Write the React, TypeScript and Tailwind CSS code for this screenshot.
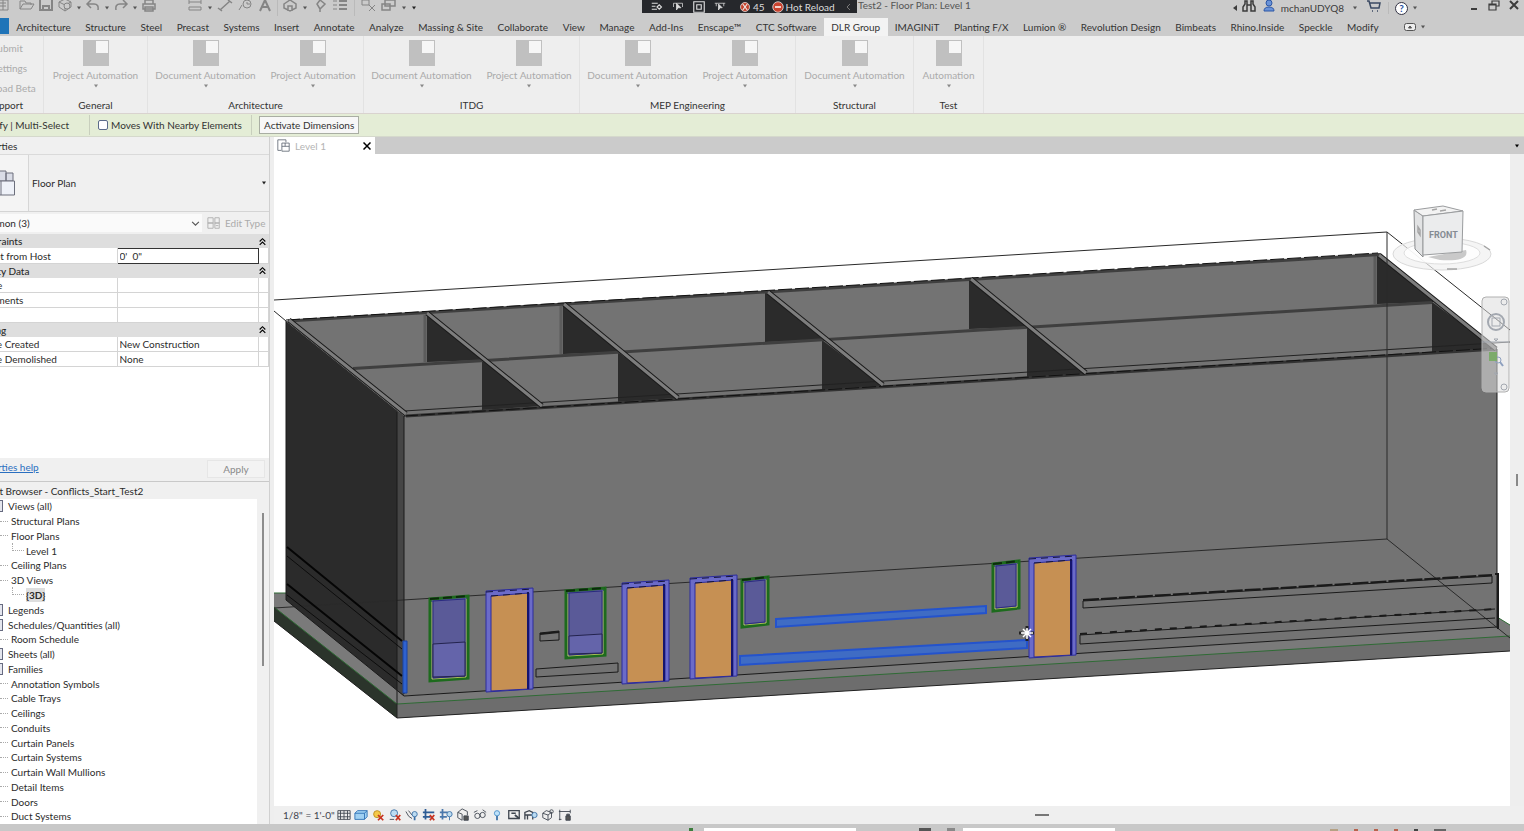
import { useState } from 'react';
import type { ReactNode } from 'react';
import clsx from 'clsx';

const TABS = [
    'Architecture', 'Structure', 'Steel', 'Precast', 'Systems', 'Insert', 'Annotate', 'Analyze',
    'Massing & Site', 'Collaborate', 'View', 'Manage', 'Add-Ins', 'Enscape™', 'CTC Software',
    'DLR Group', 'IMAGINiT', 'Planting F/X', 'Lumion ®', 'Revolution Design', 'Bimbeats',
    'Rhino.Inside', 'Speckle', 'Modify',
];

const PANELS = [
    { title: 'General', width: 'w-[104px]', tools: ['Project Automation'] },
    { title: 'Architecture', width: 'w-[216px]', tools: ['Document Automation', 'Project Automation'] },
    { title: 'ITDG', width: 'w-[216px]', tools: ['Document Automation', 'Project Automation'] },
    { title: 'MEP Engineering', width: 'w-[216px]', tools: ['Document Automation', 'Project Automation'] },
    { title: 'Structural', width: 'w-[118px]', tools: ['Document Automation'] },
    { title: 'Test', width: 'w-[70px]', tools: ['Automation'] },
];

const PROPERTY_GROUPS = [
    { name: 'Constraints', rows: [{ label: 'Offset from Host', value: "0'  0\"", editing: true }] },
    {
        name: 'Identity Data',
        rows: [
            { label: 'Image', value: '' },
            { label: 'Comments', value: '' },
            { label: 'Mark', value: '' },
        ],
    },
    {
        name: 'Phasing',
        rows: [
            { label: 'Phase Created', value: 'New Construction' },
            { label: 'Phase Demolished', value: 'None' },
        ],
    },
];

const BROWSER_ITEMS = [
    { level: 0, name: 'Views (all)' },
    { level: 1, name: 'Structural Plans' },
    { level: 1, name: 'Floor Plans' },
    { level: 2, name: 'Level 1' },
    { level: 1, name: 'Ceiling Plans' },
    { level: 1, name: '3D Views' },
    { level: 2, name: '{3D}' },
    { level: 0, name: 'Legends' },
    { level: 0, name: 'Schedules/Quantities (all)' },
    { level: 1, name: 'Room Schedule' },
    { level: 0, name: 'Sheets (all)' },
    { level: 0, name: 'Families' },
    { level: 1, name: 'Annotation Symbols' },
    { level: 1, name: 'Cable Trays' },
    { level: 1, name: 'Ceilings' },
    { level: 1, name: 'Conduits' },
    { level: 1, name: 'Curtain Panels' },
    { level: 1, name: 'Curtain Systems' },
    { level: 1, name: 'Curtain Wall Mullions' },
    { level: 1, name: 'Detail Items' },
    { level: 1, name: 'Doors' },
    { level: 1, name: 'Duct Systems' },
];

function Icon({ children, className = 'size-4' }: { children: ReactNode; className?: string }) {
    return (
        <svg viewBox="0 0 16 16" fill="none" stroke="currentColor" className={clsx('shrink-0', className)} aria-hidden="true">
            {children}
        </svg>
    );
}

function Caret({ className = 'text-[#555]' }: { className?: string }) {
    return (
        <svg viewBox="0 0 6 4" className={clsx('h-1 w-[6px] shrink-0', className)} fill="currentColor" aria-hidden="true">
            <path d="M1 0.5h4L3 3.5z" />
        </svg>
    );
}

function TitleBar() {
    return (
        <header className="flex h-[18px] shrink-0 items-start overflow-hidden bg-[#cbcbcb] text-[#555]">
            {/* Quick access tools */}
            <div className="flex w-[642px] shrink-0 items-center text-[#858585]">
                <div className="flex w-[170px] shrink-0 items-center gap-[3px]">
                    <Icon className="-ml-1 size-4"><path d="M2 0h10v10H2zM4 3h6M4 6h6M7 0v10" /></Icon>
                    <Icon className="ml-1 size-4"><path d="M1 9V1h5l1 2h5v2M1 9l3-5h11l-3 5z" /></Icon>
                    <Icon><path strokeWidth="2" d="M2 0v10h12V0M5 10V6h6v4" /></Icon>
                    <Icon><path d="M2 2l6-3 6 3v5l-6 4-6-4zM2 2l6 3 6-3M8 5v6" /><circle cx="10" cy="6" r="3" fill="#cbcbcb" /></Icon>
                    <Caret />
                    <Icon><path d="M6 0L2 4l4 4M2 4h7q5 0 4 6" strokeWidth="1.500" /></Icon>
                    <Caret />
                    <Icon><path d="M10 0l4 4-4 4M14 4H7q-5 0-4 6" strokeWidth="1.500" /></Icon>
                    <Caret />
                    <Icon><path d="M4 4V0h8v4M2 4h12v5H2zM4 7h8v4H4z" strokeWidth="1.500" /></Icon>
                </div>
                <div className="ml-[17px] flex items-center gap-1">
                    <Icon><path d="M2 0v4M14 0v4M2 2h12M2 7h12v3H2z" /></Icon>
                    <Caret />
                    <Icon><path d="M3 10L13 1M1 8l4 3M11 0l4 3" strokeWidth="1.500" /></Icon>
                    <Icon><path d="M2 10L5 5" /><circle cx="10" cy="4" r="4" /><path d="M10 2v2h3" /></Icon>
                    <Icon><path strokeWidth="2" d="M3 11L8 0l5 11M5 7h6" /></Icon>
                    <span className="h-4 w-px bg-[#bababa]" />
                    <Icon><path d="M2 4l6-4 6 4v4l-6 3-6-3zM6 11V6h4v5" strokeWidth="1.500" /></Icon>
                    <Caret />
                    <Icon><path d="M8 0l5 4-5 5-3-5zM8 9v3" strokeWidth="1.500" /></Icon>
                    <Icon><path d="M1 1h4M1 5h4M1 9h4" /><path strokeWidth="2" d="M7 1h8M7 5h8M7 9h8" /></Icon>
                    <span className="mx-[2px] h-4 w-px bg-[#bababa]" />
                    <Icon><path d="M1 0h7v5H1zM8 5l6 6M14 5l-6 6" /></Icon>
                    <Icon><path d="M4 0h10v6H4zM1 4h8v6H1z" strokeWidth="1.500" /></Icon>
                    <Caret />
                    <Caret className="text-[#222]" />
                </div>
            </div>

            {/* Hot reload overlay */}
            <div className="flex h-[13px] w-[215px] shrink-0 items-center gap-[5px] bg-[#26282c] pl-[7px] leading-[10px] text-[#ddd]">
                <Icon className="h-3 w-4"><path d="M1 3h8M1 7h5M1 11h7M8 8l3-3 3 3-3 3z" strokeWidth="1.500" /></Icon>
                <Icon className="h-3 w-4"><path d="M2 8V3h12v5" /><path d="M6 3l6 6H8l-2 3z" fill="currentColor" /></Icon>
                <Icon className="h-3 w-4"><path d="M1 1h14v14H1zM5 5h6v6H5z" strokeWidth="1.500" /></Icon>
                <Icon className="h-3 w-4"><path d="M1 3h14M3 7V3M13 7V3" /><path d="M6 4l5 5H8l-2 3z" fill="currentColor" /></Icon>
                <span className="ml-1 flex items-center">
                    <Icon className="h-3 w-4"><circle cx="8" cy="8" r="6" fill="#c5442e" stroke="#eee" /><path d="M5 4l6 8M11 4l-6 8" stroke="#eee" strokeWidth="1.500" /></Icon>
                    45
                </span>
                <span className="flex items-center whitespace-nowrap">
                    <Icon className="h-3 w-4"><circle cx="8" cy="8" r="7" fill="#c9432f" stroke="#eee" /><path d="M4 8h8" strokeWidth="2" stroke="#fff" /></Icon>
                    Hot Reload
                </span>
                <Icon className="ml-auto mr-1 size-2 text-[#777]"><path d="M10 2L4 8l6 6" strokeWidth="2" /></Icon>
            </div>
            <span className="whitespace-nowrap pl-px leading-[10px]">Test2 - Floor Plan: Level 1</span>

            <div className="ml-auto flex items-center gap-1 pr-[2px] leading-[11px] text-[#3c3c3c]">
                <svg viewBox="0 0 4 6" className="h-[6px] w-1" fill="currentColor" aria-hidden="true"><path d="M4 0v6L0 3z" /></svg>
                <Icon><path d="M4 1v3L2 7v4h4V1zM12 1v3l2 3v4h-4V1zM6 5h4" strokeWidth="1.500" /></Icon>
                <Icon className="size-4 text-[#2d57a5]"><circle cx="8" cy="3" r="3" fill="#6a93d8" /><path d="M3 11q0-4 5-4t5 4z" fill="#6a93d8" /></Icon>
                <span>mchanUDYQ8</span>
                <Caret className="mx-1 text-[#555]" />
                <Icon><path d="M1 1h2l2 7h8l1-5H4M6 11h1M11 11h1" strokeWidth="1.500" stroke="#3b4a63" /></Icon>
                <span className="mx-[2px] h-3 w-px bg-[#bababa]" />
                <span className="flex size-[13px] items-center justify-center rounded-full border border-[#334] bg-white font-bold text-[#2450a0]">?</span>
                <Caret />
                <button aria-label="Minimize" className="ml-11"><Icon><path d="M5 9h6" strokeWidth="2" /></Icon></button>
                <button aria-label="Restore"><Icon><path d="M6 4V1h7v5h-3M3 4h7v6H3zM3 5h7" strokeWidth="1.200" /></Icon></button>
                <button aria-label="Close"><Icon><path d="M4 1l8 8M12 1l-8 8" strokeWidth="2" /></Icon></button>
            </div>
        </header>
    );
}

function RibbonTabs({ active, onSelect }: { active: string; onSelect: (tab: string) => void }) {
    return (
        <nav className="flex h-[18px] shrink-0 bg-[#cbcbcb]">
            <button aria-label="File" className="h-4 w-[9px] shrink-0 bg-[#1f74b8]" />
            <div className="flex min-w-0 flex-auto">
                {TABS.map((tab) => (
                    <button
                        key={tab}
                        onClick={() => onSelect(tab)}
                        className={clsx('flex-auto whitespace-nowrap text-[#333]', tab === active && 'bg-[#f3f3f3]')}
                    >
                        {tab}
                    </button>
                ))}
            </div>
            <button aria-label="Ribbon display" className="flex w-[138px] shrink-0 items-center gap-1 pl-[18px] text-[#555]">
                <svg viewBox="0 0 12 8" className="h-2 w-3" fill="none" stroke="currentColor" aria-hidden="true">
                    <rect x="0.5" y="0.5" width="11" height="7" rx="2" fill="#eee" />
                    <path d="M4.500 5L6 3l1.500 2z" fill="currentColor" />
                </svg>
                <Caret />
            </button>
        </nav>
    );
}

function Ribbon() {
    return (
        <section className="flex h-[78px] shrink-0 border-b border-[#d9d3cf] bg-[#eeeeee]">
            <div className="flex w-[43px] shrink-0 flex-col overflow-hidden text-[#ababab]">
                <div className="-ml-2 flex flex-col gap-[6px] whitespace-nowrap pt-[5px]">
                    <button className="text-left">Submit</button>
                    <button className="text-left">Settings</button>
                    <button className="text-left">Load Beta</button>
                </div>
                <div className="-ml-3 mt-auto pb-[1px] text-[#333]">Support</div>
            </div>
            {PANELS.map((panel) => (
                <div key={panel.title} className={clsx('flex shrink-0 flex-col border-l border-[#e2e2e2]', panel.width)}>
                    <div className="flex justify-around pt-1">
                        {panel.tools.map((tool) => (
                            <button key={tool} className="flex flex-col items-center whitespace-nowrap text-[#ababab]">
                                <svg viewBox="0 0 26 26" className="mb-[2px] size-[26px]" aria-hidden="true">
                                    <path d="M0 0h26v26H0z" fill="#c0c0c0" />
                                    <path d="M13 1h12v12H13z" fill="#f6f6f6" />
                                </svg>
                                {tool}
                                <Caret className="mt-[2px] text-[#888]" />
                            </button>
                        ))}
                    </div>
                    <div className="mt-auto pb-[1px] text-center text-[#333]">{panel.title}</div>
                </div>
            ))}
            <div className="border-l border-[#e2e2e2]" />
        </section>
    );
}

function OptionsBar() {
    return (
        <section className="flex h-[23px] shrink-0 items-center overflow-hidden whitespace-nowrap border-b border-[#d5d9cc] bg-[#e4edd6] text-[#333]">
            <div className="flex w-[90px] shrink-0 justify-end overflow-hidden border-r border-[#c8cfbd] pr-5 leading-5">Modify | Multi-Select</div>
            <label className="flex w-[162px] shrink-0 items-center gap-[3px] border-r border-[#c8cfbd] pl-2 leading-5">
                <input type="checkbox" className="size-[10px] appearance-none rounded-[2px] border border-[#5b6b8a] bg-white" />
                Moves With Nearby Elements
            </label>
            <button className="ml-[7px] h-[18px] shrink-0 border border-[#a9aea3] bg-[#f7f7f7] px-1">Activate Dimensions</button>
        </section>
    );
}

function Properties() {
    return (
        <section className="flex h-[345px] shrink-0 flex-col overflow-hidden border-b border-[#c9c9c9] bg-[#f0f0f0]">
            <h2 className="-ml-7 h-[18px] shrink-0 border-b border-[#dadada] leading-[18px]">Properties</h2>
            <div className="flex h-[57px] shrink-0 items-center border-b border-[#d4d4d4] pr-[2px]">
                <div className="flex h-full w-[29px] items-center border-r border-[#d6d6d6] bg-[#f4f4f4]">
                    <svg viewBox="0 0 16 28" className="h-7 w-4" fill="#eef1f8" stroke="#6c6f7c" aria-hidden="true">
                        <path d="M-4 2H6v10H-4zM6 4h7v8H6z" fill="#d9dce6" />
                        <path d="M-4 12H14.500V26H-4zM1 12v14" />
                    </svg>
                </div>
                <span className="pl-[3px]">Floor Plan</span>
                <Caret className="ml-auto text-[#222]" />
            </div>
            <div className="flex h-[22px] shrink-0 items-center">
                <div className="flex h-[18px] w-[202px] items-center overflow-hidden bg-[#fafafa]">
                    <select aria-label="Selection filter" className="-ml-6 flex-1 appearance-none bg-transparent">
                        <option>Common (3)</option>
                    </select>
                    <Icon className="mr-[2px] size-[9px] text-[#555]"><path d="M2 5l6 6 6-6" strokeWidth="2" /></Icon>
                </div>
                <button className="flex items-center gap-1 pl-[5px] text-[#ababab]">
                    <Icon className="size-[14px]"><path d="M1 2h6v6H1zM9 2h5v6H9zM1 8h6v6H1zM9 8h5v6H9zM10 11h3" /></Icon>
                    Edit Type
                </button>
            </div>
            <div className="min-h-0 flex-1 bg-white">
                <table className="-ml-7 h-[133px] w-[297px] table-fixed border-collapse leading-3">
                    <colgroup>
                        <col className="w-[145px]" />
                        <col className="w-[141px]" />
                        <col />
                    </colgroup>
                    {PROPERTY_GROUPS.map((group) => (
                        <tbody key={group.name}>
                            <tr className="bg-[#dedede]">
                                <th colSpan={2} className="p-0 text-left font-medium">{group.name}</th>
                                <td className="p-0">
                                    <Icon className="size-[9px] text-black"><path d="M3 8l5-5 5 5M3 14l5-5 5 5" strokeWidth="2" /></Icon>
                                </td>
                            </tr>
                            {group.rows.map((row) => (
                                <tr key={row.label} className="border-b border-[#d4d4d4]">
                                    <td className="border-r border-[#d4d4d4] p-0 pl-1">{row.label}</td>
                                    <td className={clsx('p-0', 'editing' in row ? 'border border-[#333]' : 'border-r border-[#d4d4d4]')}>
                                        <input
                                            aria-label={row.label}
                                            defaultValue={row.value}
                                            className="block h-3 w-full bg-transparent px-[2px] outline-none"
                                        />
                                    </td>
                                    <td className="border-r border-[#d4d4d4] p-0" />
                                </tr>
                            ))}
                        </tbody>
                    ))}
                </table>
            </div>
            <footer className="flex h-[23px] shrink-0 justify-between">
                <a href="#help" className="-ml-7 leading-[18px] text-[#2a6fc0] underline">Properties help</a>
                <button className="mr-1 mt-[2px] h-[18px] w-[58px] border border-[#e6e6e6] bg-[#f3f3f3] text-[#8a8a8a]">Apply</button>
            </footer>
        </section>
    );
}

function ProjectBrowser() {
    return (
        <section className="flex min-h-0 flex-1 flex-col overflow-hidden bg-[#f0f0f0]">
            <h2 className="-ml-7 h-[17px] shrink-0 whitespace-nowrap leading-[19px]">Project Browser - Conflicts_Start_Test2</h2>
            <div className="flex min-h-0 flex-1">
                <ul className="flex w-[257px] flex-col bg-white">
                    {BROWSER_ITEMS.map((item) => (
                        <li key={item.name} className="flex min-h-0 flex-1 items-center whitespace-nowrap leading-[14px]">
                            {item.level === 0 && <span className="mr-[5px] h-3 w-[3px] border-y border-r border-[#666a80] bg-[#e4e6ee]" />}
                            {item.level === 1 && <span className="mr-[3px] w-2 border-t border-dotted border-[#aaa]" />}
                            {item.level === 2 && <span className="mb-2 ml-3 mr-[2px] h-2 w-3 border-b border-l border-dotted border-[#aaa]" />}
                            <span className={clsx(item.name === '{3D}' && 'bg-[#dedede] font-bold')}>{item.name}</span>
                        </li>
                    ))}
                </ul>
                <div className="flex flex-1 justify-center pt-[14px]">
                    <div className="h-[153px] w-[2px] bg-[#8c8c8c]" />
                </div>
            </div>
        </section>
    );
}

function Door({ x, y, w, h, slope = 4 }: { x: number; y: number; w: number; h: number; slope?: number }) {
    const r = x + w;
    return (
        <g>
            <path d={`M${x} ${y}L${r} ${y - slope}V${y + h - slope}L${x} ${y + h}Z`} fill="#6b6bc8" stroke="#2c2c9c" />
            <path d={`M${x + 5} ${y + 5}L${r - 4} ${y + 5 - slope}V${y + h - slope}L${x + 5} ${y + h - 1}Z`} fill="#c69053" stroke="#2c2c9c" />
            <path d={`M${r - 5} ${y + 4 - slope}V${y + h - slope}`} stroke="#15156e" strokeWidth="2" />
            <path d={`M${x} ${y + 1}L${r} ${y + 1 - slope}M${x + 5} ${y + 5}L${r - 4} ${y + 5 - slope}`} stroke="#15153c" strokeDasharray="7 5" />
        </g>
    );
}

function Casement({ x, y, w, h, sill = 0 }: { x: number; y: number; w: number; h: number; sill?: number }) {
    const r = x + w;
    const b = y + h;
    return (
        <g>
            <path d={`M${x} ${y}L${r} ${y - 3}V${b - 3}L${x} ${b}Z`} fill="#5a5a98" stroke="#1d6b1d" strokeWidth="3" />
            <path d={`M${x + 2} ${y + 3}V${b - 2}L${r - 2} ${b - 4}V${y}`} fill="none" stroke="#a9bd55" />
            <path d={`M${x + 3} ${y + 2}L${r - 3} ${y}V${b - 5}L${x + 3} ${b - 3}Z`} fill="none" stroke="#2a2a80" />
            <path d={`M${x} ${y}L${r} ${y - 3}`} stroke="#0c2a0c" strokeDasharray="9 4" strokeWidth="2" />
            {sill > 0 && <path d={`M${x + 3} ${y + sill}L${r - 3} ${y + sill - 2}V${b - 5}L${x + 3} ${b - 4}Z`} fill="#6464aa" stroke="#23234e" />}
        </g>
    );
}

function ModelCanvas() {
    return (
        <svg
            viewBox="274 154 1236 653"
            preserveAspectRatio="xMinYMin slice"
            className="min-h-0 min-w-0 flex-1 bg-white"
            role="img"
            aria-label="3D view"
        >
            {/* Floor slab */}
            <path d="M274 593H286L404 696L1497 617L1510 625V651L397 718L274 621Z" fill="#7a7a7a" />
            <path d="M274 607L397 704V718L274 621Z" fill="#2b342b" />
            <path d="M397 704L1510 636V651L397 718Z" fill="#6d6d6d" />
            <path d="M274 593H286M274 607L397 704L1510 636M1497 617L1510 625" fill="none" stroke="#2f6b35" />
            <path d="M274 621L397 718L1510 651M397 704V718" fill="none" stroke="#222" />

            {/* Building envelope */}
            <path d="M286 321L1377 254L1497 349L404 416Z" fill="#737373" />
            <path d="M286 321L404 416V696L286 600Z" fill="#2b2b2b" />
            <path d="M397 411L404 416V696L397 690Z" fill="#454545" />
            <path d="M404 416L1497 349V627L404 696Z" fill="#737373" />

            {/* Shaded faces of the cross walls */}
            <g fill="#2b2b2b">
                <path d="M427 314V362L484 360Z" />
                <path d="M482 360V410L542 406Z" />
                <path d="M563 305V354L620 352Z" />
                <path d="M618 352V402L678 398Z" />
                <path d="M765 292V342L824 340Z" />
                <path d="M822 340V390L883 386Z" />
                <path d="M969 280V329L1028 327Z" />
                <path d="M1027 327V378L1086 374Z" />
                <path d="M1377 255V304L1434 302Z" />
                <path d="M1432 302V353L1496 349Z" />
            </g>
            <path d="M425 315V362M561 306V354M1375 256V304" stroke="#5c5c5c" strokeWidth="3" />

            {/* Wall tops */}
            <path d="M288 321L1380 254.500M353 368.500L1432 302.500" stroke="#3f3f3f" strokeWidth="3" />
            <path d="M406 416L1497 349" stroke="#333" strokeWidth="3" />
            <path d="M404 411L1510 342" stroke="#222" />
            <path d="M286 320L1378 253M404 416L1497 348" stroke="#111" strokeDasharray="14 3" />
            <path d="M289 320L406 414M427 313L542 406M564 304L678 398M768 292L883 385M971 279L1086 373M1379 255L1496 349" stroke="#1a1a1a" strokeWidth="5" />
            <path d="M289 320L406 414M427 313L542 406M564 304L678 398M768 292L883 385M971 279L1086 373M1379 255L1496 349" stroke="#7d7d7d" strokeWidth="3" />

            {/* Section box */}
            <path d="M274 300L1387 232L1510 330M1387 232V539M274 608L1387 539L1510 638M274 311L286 321" fill="none" stroke="#2a2a2a" />
            <path d="M286 321V600L404 696L1497 627V349M397 412V704M404 416V694" fill="none" stroke="#1a1a1a" />

            {/* Rails on the side wall */}
            <path d="M287 547L402 641M287 584L402 676" stroke="#050505" strokeWidth="2" />
            <path d="M287 556L402 649M287 595L402 684" stroke="#0c0c0c" />
            <path d="M403 641H407V693H403Z" fill="#2f62cf" stroke="#1844a8" />

            {/* Rails on the front wall */}
            <g fill="none" stroke="#1a1a1a">
                <path d="M536 669L618 663V672L536 677ZM540 633L559 631V640L540 641Z" />
                <path d="M540 634L559 632" strokeWidth="2" />
                <path d="M1083 601L1492 576V583L1083 608Z" />
                <path d="M1083 600L1492 575" strokeWidth="2" strokeDasharray="16 2" />
                <path d="M1080 635L1495 609M1080 644L1495 618M1080 635V644" />
                <path d="M1080 634L1495 609" strokeWidth="2" strokeDasharray="7 8" />
                <path d="M1495 574H1498V629" strokeWidth="2" />
            </g>
            <g fill="#3f6cc4" stroke="#2453cc" strokeWidth="2">
                <path d="M776 619L986 606V613L776 627Z" />
                <path d="M740 656L1027 640V648L740 665Z" />
            </g>

            <Casement x={430} y={599} w={38} h={82} sill={45} />
            <Casement x={566} y={591} w={39} h={67} sill={45} />
            <Casement x={742} y={580} w={26} h={47} />
            <Casement x={993} y={564} w={26} h={47} />
            <Door x={486} y={591} w={47} h={101} slope={3} />
            <Door x={622} y={583} w={47} h={101} slope={3} />
            <Door x={690} y={578} w={47} h={101} slope={3} />
            <Door x={1029} y={558} w={47} h={100} slope={3} />

            {/* Move cursor */}
            <path d="M1027 626V641M1019 633H1035" stroke="#222" strokeWidth="3" strokeDasharray="3 9" />
            <path d="M1027 628V639M1021 633H1033M1023 629L1031 637M1031 629L1023 637" stroke="#fff" strokeWidth="1.500" />

            {/* View cube */}
            <ellipse cx="1442" cy="254" rx="49" ry="16" fill="#f1f1f1" fillOpacity="0.7" stroke="#d9d9d9" />
            <ellipse cx="1442" cy="253" rx="38" ry="11" fill="#fff" fillOpacity="0.8" stroke="#dedede" />
            <path d="M1428 257L1466 250Q1470 262 1440 260Z" fill="#c9c9c9" />
            <path d="M1414 210L1423 216V257L1415 249Z" fill="#e2e3e4" stroke="#8a8c8e" />
            <path d="M1414 210L1443 206L1463 211L1423 216Z" fill="#f3f3f3" stroke="#9a9c9e" />
            <path d="M1423 216L1463 211L1462 252L1423 255Z" fill="#ebeced" stroke="#9a9c9e" />
            <text x="1429" y="238" className="fill-[#858b93] font-[Roboto,sans-serif] text-[9px] font-bold">FRONT</text>
            <path d="M1418 227l2 3v5l-2-3zM1432 210l5-1M1440 211l6-1M1447 269h10M1484 246l6 4" stroke="#a5a5a5" strokeWidth="1.500" fill="none" />

            {/* Navigation bar */}
            <rect x="1482" y="297" width="27" height="95" rx="4" fill="#dcdcdc" fillOpacity="0.55" stroke="#b0b0b0" />
            <g fill="none" stroke="#a3a8b0">
                <circle cx="1504" cy="302" r="3" />
                <circle cx="1504" cy="387" r="3" />
                <circle cx="1496" cy="322" r="8" strokeWidth="2" />
                <rect x="1492" y="318" width="8" height="8" />
                <path d="M1482 342H1509M1494 339h4l-2 2zM1494 373h4l-2 2z" />
                <circle cx="1498" cy="360" r="3" stroke="#8ea0bf" />
                <path d="M1500 362l3 4" stroke="#8ea0bf" strokeWidth="2" />
            </g>
            <path d="M1489 352h8v9h-8z" fill="#7cab6a" />
        </svg>
    );
}

function ViewControls() {
    return (
        <div className="flex h-[18px] shrink-0 items-center gap-[3px] bg-[#efefef] pl-[9px] text-[#3f4650]">
            <span className="w-[51px] whitespace-nowrap">1/8" = 1'-0"</span>
            <Icon className="size-[14px]"><path d="M1 3h14v10H1zM1 6h14M1 10h14M4 3v10M8 3v10M12 3v10" /></Icon>
            <Icon className="size-[14px] text-[#2b6fb3]"><path d="M1 6l3-3h11v7l-3 3H1zM1 6h11v7M12 6l3-3" fill="#9fd0f2" /></Icon>
            <Icon className="size-[14px]"><circle cx="7" cy="7" r="4" fill="#f5c94a" stroke="#b98a1e" /><path d="M8 8l6 6M14 8l-6 6" stroke="#c8321f" strokeWidth="2" /></Icon>
            <Icon className="size-[14px]"><circle cx="7" cy="6" r="4" fill="#bcdcf2" stroke="#3a6fa5" /><path d="M2 13h5" /><path d="M9 8l5 6M14 8l-5 6" stroke="#c8321f" strokeWidth="2" /></Icon>
            <Icon className="size-[14px]"><path d="M1 4q3 7 7 8M4 3l4 5" /><circle cx="11" cy="7" r="3" fill="#bcdcf2" stroke="#3a6fa5" /><path d="M11 10v4" stroke="#3a6fa5" strokeWidth="2" /></Icon>
            <Icon className="size-[14px]"><path d="M4 1v12M1 5h13M1 10h9" stroke="#2d5c94" strokeWidth="2" /><path d="M9 8l5 6M14 8l-5 6" stroke="#c8321f" strokeWidth="2" /></Icon>
            <Icon className="size-[14px]"><path d="M4 1v12M1 5h9M1 10h8" stroke="#4a78ac" strokeWidth="2" /><circle cx="12" cy="7" r="3" fill="#bcdcf2" stroke="#3a6fa5" /><path d="M12 10v4" stroke="#3a6fa5" /></Icon>
            <Icon className="size-[14px]"><path d="M2 5l5-4 6 3v4M2 5v6l5 3M2 5l5 2v7" /><path d="M9 9h5v5H9z" fill="#555" /></Icon>
            <Icon className="size-[14px]"><path d="M1 5l4-2M15 5l-4-3" /><circle cx="5" cy="9" r="3" /><circle cx="11" cy="8" r="3" /></Icon>
            <Icon className="size-[14px]"><circle cx="8" cy="6" r="3" fill="#bfe2fa" stroke="#4a90c8" /><path d="M8 9v5" stroke="#3a6fa5" strokeWidth="2" /></Icon>
            <Icon className="size-[14px]"><path d="M2 3h12v9H2zM5 6h5" strokeWidth="1.500" /><path d="M9 8l5 4" strokeWidth="2" /></Icon>
            <Icon className="size-[14px]"><path d="M1 13V5l5-2 4 2v8M4 13V7M1 8h8" strokeWidth="1.500" /><circle cx="12" cy="8" r="3" fill="#bcdcf2" stroke="#3a6fa5" /></Icon>
            <Icon className="size-[14px]"><path d="M2 6l4-3 6 2v6l-4 3-6-3zM2 6l6 2v6M8 8l4-3" /><circle cx="12" cy="4" r="2" /></Icon>
            <Icon className="size-[14px]"><path d="M2 2v12M1 4h13M14 2v4M1 13h3" /><path d="M9 9h5v5H9zM10 9V7h3v2" fill="#555" /></Icon>
            <span className="ml-auto mr-[475px] h-[2px] w-[14px] bg-[#777]" />
        </div>
    );
}

function StatusBar() {
    return (
        <footer className="flex h-[7px] shrink-0 items-end overflow-hidden bg-[#c8c8c8]">
            <div className="flex w-[704px] justify-end pr-[11px]"><span className="h-[3px] w-1 bg-[#3c7d3c]" /></div>
            <div className="h-[3px] w-[152px] bg-white" />
            <div className="flex w-[107px] justify-end gap-4 pr-2"><span className="h-[3px] w-3 bg-[#555]" /><span className="h-[3px] w-2 bg-[#888]" /></div>
            <div className="h-[3px] w-[152px] bg-white" />
            <div className="ml-auto flex gap-4 pr-[78px]">
                <span className="h-[2px] w-2 bg-[#b5a184]" />
                <span className="h-[2px] w-1 bg-[#b7634f]" />
                <span className="h-[2px] w-1 bg-[#b7634f]" />
                <span className="h-[2px] w-1 bg-[#b7634f]" />
                <span className="h-[2px] w-1 bg-[#444]" />
                <span className="h-[2px] w-3 bg-[#666]" />
            </div>
        </footer>
    );
}

export default function App() {
    const [activeTab, setActiveTab] = useState('DLR Group');

    return (
        <div className="flex h-screen flex-col overflow-hidden bg-[#eeeeee] font-[Lato,sans-serif] text-[10px] leading-[14px] text-[#2b2b2b]">
            <TitleBar />
            <RibbonTabs active={activeTab} onSelect={setActiveTab} />
            <Ribbon />
            <OptionsBar />

            <main className="flex min-h-0 flex-1">
                <aside className="flex w-[270px] shrink-0 flex-col overflow-hidden border-r border-[#d0d0d0]">
                    <Properties />
                    <ProjectBrowser />
                </aside>

                <section className="ml-1 flex min-w-0 flex-1 flex-col">
                    {/* Open view tabs */}
                    <div className="flex h-[17px] shrink-0 items-center bg-[#cbcbcb]">
                        <div className="flex h-full w-[101px] items-center bg-white pl-[3px] pr-1 text-[#b4b4b4]">
                            <Icon className="size-[13px] text-[#5d6470]"><path d="M1 1h10v3M1 1v13h4M6 5h9v10H6zM6 9h9M10 5v4" /></Icon>
                            <span className="pl-[5px]">Level 1</span>
                            <button aria-label="Close view" className="ml-auto"><Icon className="size-2 text-black"><path d="M1 1l14 14M15 1L1 15" strokeWidth="3" /></Icon></button>
                        </div>
                        <Caret className="ml-auto mr-1 text-black" />
                    </div>
                    <div className="flex min-h-0 flex-1">
                        <ModelCanvas />
                        <div className="flex w-[14px] shrink-0 items-center justify-center bg-[#eeeeee]">
                            <span className="h-3 w-[2px] bg-[#888]" />
                        </div>
                    </div>
                    <ViewControls />
                </section>
            </main>

            <StatusBar />
        </div>
    );
}
